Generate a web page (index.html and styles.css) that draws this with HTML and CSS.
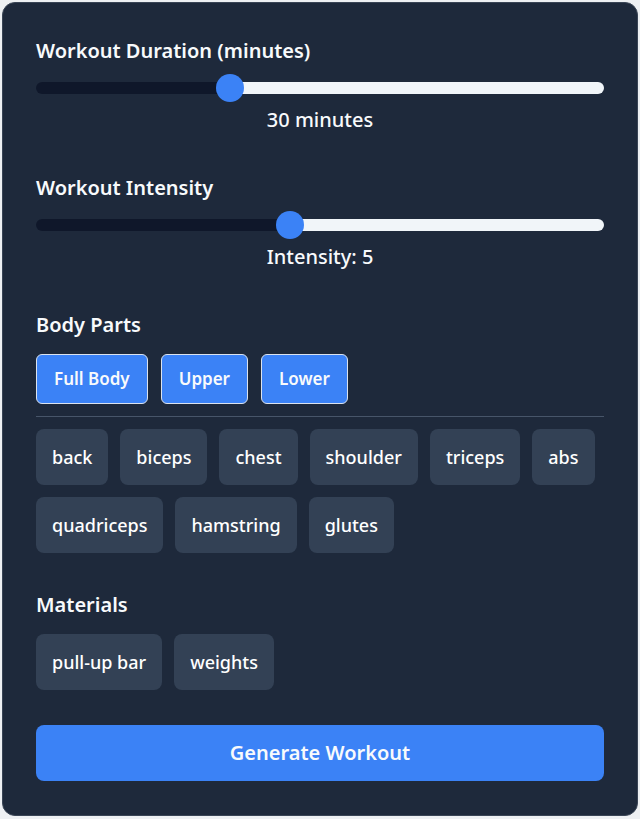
FILE: index.html
```html
<!DOCTYPE html>
<html lang="en">

<head>
    <meta charset="UTF-8">
    <meta name="viewport" content="width=device-width, initial-scale=1.0">
    <title>Workout Generator</title>
    <link rel="stylesheet" href="styles.css">
</head>

<body>
    <div class="card">
        <div class="field">
            <h2 class="field-title">Workout Duration (minutes)</h2>
            <input type="range" class="slider" min="10" max="70" value="30" style="--fill: 34.2%">
            <div class="slider-value">30 minutes</div>
        </div>

        <div class="field">
            <h2 class="field-title">Workout Intensity</h2>
            <input type="range" class="slider" min="1" max="10" value="5" style="--fill: 44.7%">
            <div class="slider-value">Intensity: 5</div>
        </div>

        <div class="field field-body">
            <h2 class="field-title">Body Parts</h2>
            <div class="preset-row">
                <button class="preset">Full Body</button>
                <button class="preset">Upper</button>
                <button class="preset">Lower</button>
            </div>
            <hr class="divider">
            <div class="chip-list">
                <button class="chip">back</button>
                <button class="chip">biceps</button>
                <button class="chip">chest</button>
                <button class="chip">shoulder</button>
                <button class="chip">triceps</button>
                <button class="chip">abs</button>
                <button class="chip">quadriceps</button>
                <button class="chip">hamstring</button>
                <button class="chip">glutes</button>
            </div>
        </div>

        <div class="field field-materials">
            <h2 class="field-title">Materials</h2>
            <div class="chip-list">
                <button class="chip">pull-up bar</button>
                <button class="chip">weights</button>
            </div>
        </div>

        <button class="btn-generate">Generate Workout</button>
    </div>
</body>

</html>
```

FILE: styles.css
```css
* {
    margin: 0;
    padding: 0;
    box-sizing: border-box;
    font-family: 'Segoe UI', 'Noto Sans', sans-serif;
}

body {
    background: #eef0f3;
    padding: 2px;
}

.card {
    background: #1e293b;
    border: 1px solid #3a4556;
    border-radius: 13px;
    padding: 34px 33px 34px 33px;
    color: #f8fafc;
}

.field {
    margin-bottom: 42px;
}

.field-title {
    font-size: 20px;
    line-height: 28px;
    font-weight: 600;
    margin-bottom: 17px;
}

.slider {
    -webkit-appearance: none;
    appearance: none;
    display: block;
    width: 100%;
    height: 12px;
    border-radius: 6px;
    outline: none;
    background: linear-gradient(to right, #0f172a var(--fill), #f1f5f9 var(--fill));
}

.slider::-webkit-slider-thumb {
    -webkit-appearance: none;
    appearance: none;
    width: 28px;
    height: 28px;
    border-radius: 50%;
    background: #3b82f6;
    border: none;
    cursor: pointer;
}

.slider-value {
    text-align: center;
    font-size: 20px;
    line-height: 24px;
    font-weight: 500;
    margin-top: 14px;
}

.preset-row {
    display: flex;
    gap: 13px;
}

.preset {
    background: #3b82f6;
    color: #f8fafc;
    border: 1px solid #dbe3ee;
    border-radius: 6px;
    padding: 12px 17px;
    font-size: 17px;
    line-height: 24px;
    font-weight: 600;
    cursor: pointer;
}

.divider {
    border: none;
    border-top: 1px solid #475569;
    margin: 12px 0;
}

.chip-list {
    display: flex;
    flex-wrap: wrap;
    gap: 12px;
}

.chip {
    background: #334155;
    color: #ffffff;
    border: none;
    border-radius: 8px;
    padding: 16px;
    font-size: 18px;
    line-height: 24px;
    font-weight: 500;
    cursor: pointer;
}

.field-body {
    margin-bottom: 38px;
}

.field-body .field-title,
.field-materials .field-title {
    margin-bottom: 15px;
}

.field-materials {
    margin-bottom: 35px;
}

.btn-generate {
    display: block;
    width: 100%;
    background: #3b82f6;
    color: #f8fafc;
    border: none;
    border-radius: 8px;
    padding: 16px;
    font-size: 20px;
    line-height: 24px;
    font-weight: 600;
    cursor: pointer;
}
```
